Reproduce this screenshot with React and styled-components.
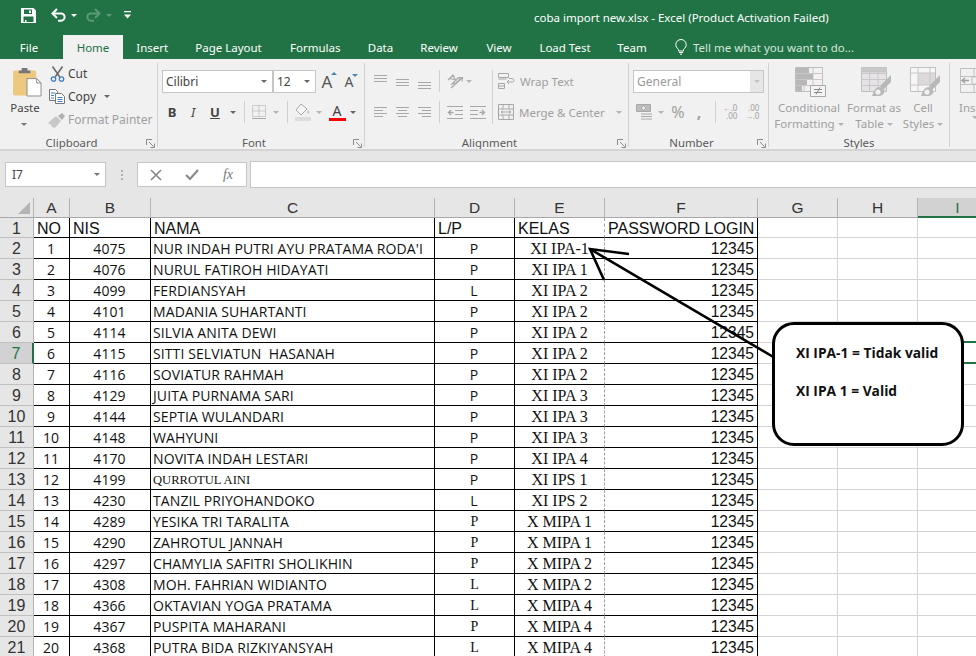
import styled, { createGlobalStyle } from "styled-components";

const GlobalStyle = createGlobalStyle`
  html, body { margin: 0; padding: 0; background: #fff; }
  body { font-family: "Noto Sans", "Open Sans", sans-serif; font-size: 12px; }
`;

const GREEN = "#217346";
const DIM = "#b4b4b4";
const DARK = "#595959";

const Page = styled.div`
  position: relative;
  width: 976px;
  height: 656px;
  overflow: hidden;
`;

/* ---------- title bar + tabs ---------- */
const Header = styled.header`
  background: ${GREEN};
  height: 59px;
  color: #fff;
`;
const TitleRow = styled.div`
  display: flex;
  height: 35px;
  align-items: center;
`;
const Qat = styled.div`
  width: 534px;
  padding: 0 0 5px 21px;
  box-sizing: border-box;
  display: flex;
  align-items: center;
`;
const Title = styled.div`
  font-size: 11.5px;
  white-space: nowrap;
`;
const Tabs = styled.nav`
  display: flex;
  height: 24px;
`;
const Tab = styled.div`
  width: ${(p) => p.$w}px;
  margin-left: ${(p) => p.$ml || 0}px;
  height: 24px;
  line-height: 25px;
  text-align: center;
  font-size: 11.5px;
  white-space: nowrap;
  background: ${(p) => (p.$active ? "#f1f1f1" : "transparent")};
  color: ${(p) => (p.$active ? GREEN : "#fff")};
`;
const TellMe = styled.div`
  display: flex;
  align-items: center;
  gap: 6px;
  margin-left: 15px;
  font-size: 11.5px;
  color: #d5e6dc;
  white-space: nowrap;
`;

/* ---------- ribbon ---------- */
const Ribbon = styled.section`
  display: flex;
  height: 92px;
  box-sizing: border-box;
  padding-top: 4px;
  background: #f1f1f1;
  border-bottom: 2px solid #d4d4d4;
  overflow: hidden;
`;
const Group = styled.div`
  flex: none;
  width: ${(p) => p.$w}px;
  height: 84px;
  border-right: 1px solid #d2d2d2;
  box-sizing: content-box;
`;
const GroupBody = styled.div`
  height: 73px;
  display: ${(p) => (p.$row ? "flex" : "flow-root")};
  padding-left: ${(p) => p.$pl || 0}px;
`;
const GroupFoot = styled.div`
  display: flex;
  align-items: center;
  height: 14px;
`;
const GroupLabel = styled.div`
  flex: 1;
  text-align: center;
  font-size: 11.4px;
  line-height: 14px;
  color: ${DARK};
  white-space: nowrap;
`;
const LauncherBox = styled.div`
  width: 14px;
  display: flex;
  justify-content: center;
`;
const Caret = styled.i`
  display: inline-block;
  width: 0;
  height: 0;
  flex: none;
  border-left: 3px solid transparent;
  border-right: 3px solid transparent;
  border-top: 3px solid ${(p) => p.$color || "#666"};
  margin-left: ${(p) => p.$ml || 0}px;
`;
const PasteCaret = styled(Caret)`
  margin-top: 7px;
`;
const Slot = styled.div`
  flex: none;
  width: ${(p) => p.$w}px;
  height: 24px;
  display: flex;
  align-items: center;
  justify-content: center;
  color: ${(p) => p.$color || DIM};
`;
const Sep = styled.i`
  display: block;
  width: 1px;
  height: 22px;
  background: #d0d0d0;
`;
const ToolRow = styled.div`
  display: flex;
  align-items: center;
  height: ${(p) => p.$h || 24}px;
  margin-top: ${(p) => p.$mt || 0}px;
`;

/* clipboard */
const PasteCol = styled.div`
  width: 48px;
  flex: none;
  display: flex;
  flex-direction: column;
  align-items: center;
  padding-top: 3px;
  font-size: 11.4px;
  color: #444;
  & svg {
    margin-left: 6px;
  }
`;
const PasteText = styled.span`
  line-height: 16px;
  margin-top: 3px;
  margin-left: 2px;
`;
const ClipRow = styled.div`
  display: flex;
  align-items: center;
  height: 23px;
  color: ${(p) => (p.$off ? "#a0a0a0" : "#444")};
  white-space: nowrap;
  font-size: 12px;
`;
const ClipIcon = styled.div`
  width: 18px;
  margin-right: 2px;
  display: flex;
  justify-content: center;
`;
const ClipCol = styled.div`
  margin-top: -1px;
`;

/* font */
const Combo = styled.div`
  flex: none;
  width: ${(p) => p.$w}px;
  height: 23px;
  box-sizing: border-box;
  border: 1px solid #c6c6c6;
  background: #fff;
  display: flex;
  align-items: center;
  justify-content: space-between;
  padding-left: 3px;
  padding-right: ${(p) => (p.$flat ? 0 : 5)}px;
  font-size: 12px;
  color: ${(p) => p.$color || "#444"};
`;
const DropFlat = styled.div`
  width: 13px;
  height: 21px;
  background: #e6e6e6;
  display: flex;
  align-items: center;
  justify-content: center;
`;
const SizeA = styled.span`
  font-size: ${(p) => p.$size}px;
  line-height: 1;
  color: #555;
  position: relative;
`;
const SizeMark = styled.i`
  position: absolute;
  right: -5px;
  top: -1px;
  width: 0;
  height: 0;
  border-left: 3px solid transparent;
  border-right: 3px solid transparent;
  ${(p) =>
    p.$up
      ? "border-bottom: 3px solid #4d82b8;"
      : "border-top: 3px solid #4d82b8;"}
`;
const FaceLetter = styled.span`
  font-size: 13px;
  font-weight: ${(p) => (p.$b ? 700 : 400)};
  font-style: ${(p) => (p.$i ? "italic" : "normal")};
  text-decoration: ${(p) => (p.$u ? "underline" : "none")};
  color: #444;
`;
const ColorLetter = styled.div`
  display: flex;
  flex-direction: column;
  align-items: center;
  font-size: 14px;
  line-height: 13px;
  color: #444;
  &::after {
    content: "";
    width: 17px;
    height: 3px;
    background: #f00;
    margin-top: 1px;
  }
`;

/* alignment */
const AlignCols = styled.div`
  display: flex;
  padding-left: 4px;
`;
const AlignCol = styled.div`
  width: ${(p) => p.$w}px;
  padding-top: 6px;
  flex: none;
`;
const VSep = styled.div`
  flex: none;
  width: 6px;
  display: flex;
  justify-content: center;
  padding-top: 7px;
  &::before {
    content: "";
    width: 1px;
    height: 54px;
    background: #d0d0d0;
  }
`;
const WideTool = styled.div`
  display: flex;
  align-items: center;
  height: 24px;
  margin-top: ${(p) => p.$mt || 0}px;
  padding-left: 3px;
  gap: 5px;
  color: #a0a0a0;
  font-size: 11.5px;
  white-space: nowrap;
`;

/* number */
const Pct = styled.span`
  font-size: 16px;
  color: #a0a0a0;
`;
const Dec = styled.span`
  display: block;
  font-size: 8px;
  line-height: 8px;
  color: #a0a0a0;
  text-align: right;
  white-space: pre;
`;

/* styles */
const BigButton = styled.div`
  flex: none;
  width: ${(p) => p.$w}px;
  display: flex;
  flex-direction: column;
  align-items: center;
  padding-top: 4px;
  font-size: 11.5px;
  line-height: 16px;
  color: #a0a0a0;
  white-space: nowrap;
`;
const BigIcon = styled.div`
  height: 30px;
  margin-bottom: 3px;
  margin-left: ${(p) => p.$ml || 0}px;
`;
const BigLine = styled.div`
  display: flex;
  align-items: center;
  gap: 3px;
`;

/* ---------- formula bar ---------- */
const FormulaBand = styled.div`
  display: flex;
  align-items: center;
  height: 47px;
  box-sizing: border-box;
  padding: 11px 0 11px 5px;
  background: #e6e6e6;
`;
const NameBox = styled.div`
  width: 101px;
  height: 25px;
  box-sizing: border-box;
  background: #fff;
  border: 1px solid #c6c6c6;
  display: flex;
  align-items: center;
  justify-content: space-between;
  padding: 0 5px 0 6px;
  font-size: 12px;
  color: #444;
`;
const Grip = styled.div`
  width: 31px;
  display: flex;
  flex-direction: column;
  align-items: center;
  gap: 2px;
  & i {
    width: 2px;
    height: 2px;
    background: #b0b0b0;
  }
`;
const FxBox = styled.div`
  width: 110px;
  height: 25px;
  box-sizing: border-box;
  background: #fff;
  border: 1px solid #c6c6c6;
  display: flex;
  align-items: center;
`;
const FxSlot = styled.div`
  width: 36px;
  display: flex;
  justify-content: center;
  font-family: "Liberation Serif", serif;
  font-style: italic;
  font-size: 14px;
  color: #777;
`;
const FormulaInput = styled.div`
  flex: 1;
  height: 25px;
  margin-left: 3px;
  background: #fff;
  border: 1px solid #c6c6c6;
  border-right: 0;
`;

/* ---------- sheet ---------- */
const Sheet = styled.div`
  display: grid;
  grid-template-columns: 34px 36px 81px 284px 80px 90px 153px 80px 80px 80px;
  grid-template-rows: 20px 20px repeat(20, 21px);
  background: #fff;
  font-family: "Liberation Sans", Arial, sans-serif;
`;
const Corner = styled.div`
  background: #e6e6e6;
  border-right: 1px solid #b4b4b4;
  border-bottom: 1px solid #a8a8a8;
  display: flex;
  align-items: flex-end;
  justify-content: flex-end;
  padding: 0 3px 3px 0;
  & svg {
    display: block;
  }
`;
const ColHead = styled.div`
  background: ${(p) => (p.$on ? "#d2d2d2" : "#e6e6e6")};
  color: ${(p) => (p.$on ? GREEN : "#333")};
  border-right: 1px solid #b4b4b4;
  border-bottom: ${(p) => (p.$on ? `2px solid ${GREEN}` : "1px solid #a8a8a8")};
  font-size: 15.5px;
  line-height: 19px;
  text-align: center;
`;
const RowHead = styled.div`
  background: ${(p) => (p.$on ? "#d2d2d2" : "#e6e6e6")};
  color: ${(p) => (p.$on ? GREEN : "#333")};
  border-right: ${(p) => (p.$on ? `2px solid ${GREEN}` : "1px solid #b4b4b4")};
  border-bottom: 1px solid #c0c0c0;
  font-size: 16px;
  line-height: 21px;
  text-align: center;
`;
const CELL_FONTS = {
  sans: `font: 16px/20px "Liberation Sans", Arial, sans-serif;`,
  num: `font: 15.6px/20px "Liberation Sans", Arial, sans-serif;`,
  ui: `font: 14px/20px "Open Sans", "Noto Sans", sans-serif; letter-spacing: 0.1px;`,
  serif: `font: 16px/20px "Liberation Serif", serif;`,
  serifSmall: `font: 14px/20px "Liberation Serif", serif;`,
  serifName: `font: 12.6px/20px "Liberation Serif", serif;`,
};
const Cell = styled.div`
  box-sizing: border-box;
  border-bottom: 1px solid #000;
  border-right: ${(p) => (p.$dashed ? "1px dashed #a0a0a0" : "1px solid #000")};
  color: #111;
  white-space: pre;
  overflow: hidden;
  padding: 1px 3px 0 ${(p) => (p.$kind === "ui" || p.$kind === "serifName" ? 2 : 3)}px;
  text-align: ${(p) => p.$align || "left"};
  ${(p) => CELL_FONTS[p.$kind]}
`;
const Blank = styled.div`
  box-sizing: border-box;
  border-right: 1px solid #d4d4d4;
  border-bottom: 1px solid #d4d4d4;
  ${(p) =>
    p.$picked &&
    `border-bottom: 2px solid ${GREEN}; box-shadow: 0 -2px 0 ${GREEN};`}
`;

/* shapes lying over the sheet */
const ArrowLayer = styled.svg`
  position: absolute;
  left: 0;
  top: 0;
  pointer-events: none;
`;
const Callout = styled.div`
  position: absolute;
  left: 772px;
  top: 322px;
  width: 192px;
  height: 124px;
  box-sizing: border-box;
  border: 3px solid #000;
  border-radius: 22px;
  background: #fff;
  padding: 18px 0 0 21px;
  font-family: "Open Sans", "Noto Sans", sans-serif;
  font-weight: 700;
  font-size: 13.8px;
  color: #111;
`;
const CalloutLine = styled.div`
  height: 38px;
  line-height: 20px;
  white-space: nowrap;
`;

/* ---------- icons ---------- */
const SaveIcon = () => (
  <svg width="15" height="15" viewBox="0 0 15 15">
    <path
      fillRule="evenodd"
      fill="#fff"
      d="M0 0h12.5L15 2.5V15H0zM3 1.5V6h8V1.5zM2.5 14h10V8.5h-10zM8 2.5h2v2.5H8z"
    />
    <path fill="#fff" d="M4 12h1.5v2H4z" />
  </svg>
);
const Turn = ({ color, flip }) => (
  <svg width="16" height="14" viewBox="0 0 16 14" style={flip ? { transform: "scaleX(-1)" } : undefined}>
    <path d="M2 5.5h8a3.6 3.6 0 0 1 0 7.2H7" fill="none" stroke={color} strokeWidth="2" />
    <path d="M6 1 1.5 5.5 6 10" fill="none" stroke={color} strokeWidth="2" />
  </svg>
);
const BarCaret = () => (
  <svg width="7" height="8" viewBox="0 0 7 8">
    <path d="M0 0h7v1.2H0zM0 3.5h7L3.5 7.5z" fill="#fff" />
  </svg>
);
const Bulb = () => (
  <svg width="12" height="16" viewBox="0 0 12 16" fill="none" stroke="#fff" strokeWidth="1">
    <path d="M3.5 10.5C1.5 8.5.8 7.5.8 5.7a5.2 5.2 0 0 1 10.4 0c0 1.8-.7 2.8-2.7 4.8v1.5h-5z" />
    <path d="M4 13.5h4M5 15.2h2" />
  </svg>
);
const Launcher = () => (
  <svg width="9" height="9" viewBox="0 0 9 9" fill="none" stroke="#8a8a8a">
    <path d="M.5 6V.5H6" />
    <path d="M3 3l4.5 4.5M8.500 4.500v4h-4" />
  </svg>
);
const PasteIcon = () => (
  <svg width="29" height="31" viewBox="0 0 30 31">
    <rect x="0" y="4" width="24" height="26" rx="2" fill="#edc87f" />
    <path d="M6 4h3V1.500h6V4h3v3H6z" fill="#767676" />
    <path d="M14.500 12.500h10l4.500 4.500v13.500H14.500z" fill="#fff" stroke="#8a8a8a" />
    <path d="M24.500 12.500V17H29" fill="none" stroke="#8a8a8a" />
  </svg>
);
const Scissors = () => (
  <svg width="15" height="16" viewBox="0 0 15 16" fill="none">
    <path d="M2.500 .5 9.800 11M12.500 .5 5.200 11" stroke="#6a6a6a" strokeWidth="1.600" />
    <circle cx="3.500" cy="13" r="2.200" stroke="#3f7fbd" strokeWidth="1.300" />
    <circle cx="11.500" cy="13" r="2.200" stroke="#3f7fbd" strokeWidth="1.300" />
  </svg>
);
const CopyIcon = () => (
  <svg width="16" height="15" viewBox="0 0 16 15" fill="#fff" stroke="#777">
    <path d="M.5.5h6l2 2v9h-8z" />
    <path d="M6.500 4.500h6l3 3v7h-9z" />
    <path d="M2 4h4M2 6.500h3M2 9h3M8.500 8.500h5M8.500 10.500h5M8.500 12.500h5" stroke="#3f7fbd" fill="none" />
  </svg>
);
const PainterIcon = () => (
  <svg width="18" height="16" viewBox="0 0 18 16">
    <path d="M0 11 8 4l5 5-6 7-3-1-1-2z" fill="#c8c8c8" />
    <path d="M10 4l4-3 3 3-3 4z" fill="#b0b0b0" />
  </svg>
);
const Lines = ({ rows, top = 0 }) => (
  <svg width="15" height="15" viewBox="0 0 15 15" stroke="#a8a8a8">
    {rows.map((r, i) => (
      <path key={i} d={`M${r[0]} ${top + 0.5 + i * 3}H${r[1]}`} />
    ))}
  </svg>
);
const Orient = () => (
  <svg width="18" height="18" viewBox="0 0 18 18" fill="none" stroke="#a8a8a8" strokeWidth="1.200">
    <path d="M2 8l5-5 3 6M3.500 6.500l5 1M6 12l6-6c2-1 2 2 0 3l-2 2z" />
    <path d="M5 16 16 6M12.500 5.500 16.500 5.500 16 9.500" />
  </svg>
);
const Indent = ({ flip }) => (
  <svg width="16" height="13" viewBox="0 0 16 13" stroke="#a8a8a8" fill="none" style={flip ? { transform: "scaleX(-1)" } : undefined}>
    <path d="M0 .5h16M8 4.500h8M8 8.500h8M0 12.500h16" />
    <path d="M6.500 6.500H1.500M4 4 1.500 6.500 4 9" strokeWidth="1.400" />
  </svg>
);
const WrapIcon = () => (
  <svg width="17" height="16" viewBox="0 0 17 16" fill="none" stroke="#a8a8a8">
    <path d="M.5.5h10v4H.5zM.5 6h8M.5 10.500h6v5h-6zM.5 13h6" />
    <path d="M9 9h5.500c2 0 2-3.500-.5-3.500H11M11 7l-2 2 2 2" />
  </svg>
);
const MergeIcon = () => (
  <svg width="16" height="16" viewBox="0 0 16 16" fill="none" stroke="#a8a8a8">
    <path d="M.5.5h15v15H.5zM.5 5h15M.5 11h15M5 .5V5M11 .5V5M5 11v4.500M11 11v4.500" />
    <path d="M3 8h10M5 6.500 3 8l2 1.500M11 6.500 13 8l-2 1.500" />
  </svg>
);
const BorderIcon = () => (
  <svg width="14" height="14" viewBox="0 0 14 14" fill="none">
    <path d="M.5.5h13v11H.5zM7 .5v11M.5 6h13" stroke="#a8a8a8" strokeDasharray="1 1" />
    <path d="M0 13.500h14" stroke="#a8a8a8" />
  </svg>
);
const FillIcon = () => (
  <svg width="16" height="18" viewBox="0 0 16 18" fill="none">
    <path d="M6 1 1 7l5 5 6-6z" stroke="#a8a8a8" fill="#f6f6f6" />
    <path d="M13 7c1 2 1.500 3 .5 3.500S12 9 13 7z" fill="#b8b8b8" />
    <path d="M0 14h16v4H0z" fill="#dcdcdc" />
  </svg>
);
const MoneyIcon = () => (
  <svg width="17" height="16" viewBox="0 0 17 16" fill="none" stroke="#a8a8a8">
    <path d="M.5.5h14v7H.5z" fill="#bdbdbd" />
    <circle cx="7.500" cy="4" r="2" fill="#f1f1f1" />
    <path d="M5 10h11M5 12.500h11M5 15h11" />
  </svg>
);
const CondIcon = () => (
  <svg width="31" height="30" viewBox="0 0 31 30">
    <path d="M.5.5h27v24H.5z" fill="#f4f0f4" stroke="#bdbdbd" />
    <path d="M9 .5v24M18 .5v24M.5 6.500h27M.5 12.500h27M.5 18.500h27" stroke="#c8c8c8" fill="none" />
    <path d="M1 1h13v5H1zM1 7h17v5H1zM1 13h11v5H1zM1 19h6v5H1z" fill="#b8b8b8" />
    <path d="M15.500 18.500h15v11h-15z" fill="#f4f4f4" stroke="#a8a8a8" />
    <path d="M19 22.500h8M19 25.500h8M25 20.500l-4 7" stroke="#8a8a8a" />
  </svg>
);
const Brush = () => (
  <>
    <path d="M30 8 19 19l3 4 8-8z" fill="#b8b8b8" />
    <path d="M19 20c-4 0-6 3-8 9h8c3-1 5-3 4-6z" fill="#b8b8b8" />
    <circle cx="17" cy="25" r="2.600" fill="#f1f1f1" />
  </>
);
const TableIcon = () => (
  <svg width="30" height="30" viewBox="0 0 30 30">
    <path d="M.5.5h25v24H.5z" fill="#e6e2e6" stroke="#c0c0c0" />
    <path d="M.5.5h25v5H.5z" fill="#c8c8c8" />
    <path d="M8.500.5v24M17 .5v24M.5 6.500h25M.5 12.500h25M.5 18.500h25" stroke="#c8c8c8" fill="none" />
    <Brush />
  </svg>
);
const CellIcon = () => (
  <svg width="30" height="30" viewBox="0 0 30 30">
    <path d="M.5.5h25v24H.5z" fill="#f6f6f6" stroke="#c0c0c0" />
    <path d="M8 6h17v12H8z" fill="#dcd8dc" />
    <path d="M.5 6h25M.5 18h25M8 .5v24M20 .5v24" stroke="#c8c8c8" fill="none" />
    <Brush />
  </svg>
);
const InsertIcon = () => (
  <svg width="30" height="30" viewBox="0 0 30 30" fill="none" stroke="#c0c0c0">
    <path d="M.5 1.500h29v24H.5zM.5 9.500h29M.5 17.500h29M14 1.500v8M14 17.500v8" />
    <path d="M9 13.500H2M5 11l-3 2.500L5 16" stroke="#a0a0a0" strokeWidth="1.400" />
    <path d="M12 10h12v7H12z" fill="#f1f1f1" />
  </svg>
);
const CrossIcon = () => (
  <svg width="12" height="12" viewBox="0 0 12 12" stroke="#8a8a8a" strokeWidth="1.700">
    <path d="M1 1l10 10M11 1 1 11" />
  </svg>
);
const CheckIcon = () => (
  <svg width="14" height="12" viewBox="0 0 14 12" fill="none" stroke="#8a8a8a" strokeWidth="2.200">
    <path d="M1 6l4 4 8-9" />
  </svg>
);

/* ---------- data ---------- */
const TABS = [
  ["File", 58, 0],
  ["Home", 60, 5, true],
  ["Insert", 58.5],
  ["Page Layout", 94],
  ["Formulas", 79.5],
  ["Data", 51],
  ["Review", 66],
  ["View", 54],
  ["Load Test", 78],
  ["Team", 56],
];

const COLS = ["A", "B", "C", "D", "E", "F", "G", "H", "I"];
const FIRST_ROW = ["NO", "NIS", "NAMA", "L/P", "KELAS", "PASSWORD LOGIN"];

const STUDENTS = [
  ["4075", "NUR INDAH PUTRI AYU PRATAMA RODA'I", "P", "XI IPA-1"],
  ["4076", "NURUL FATIROH HIDAYATI", "P", "XI IPA 1"],
  ["4099", "FERDIANSYAH", "L", "XI IPA 2"],
  ["4101", "MADANIA SUHARTANTI", "P", "XI IPA 2"],
  ["4114", "SILVIA ANITA DEWI", "P", "XI IPA 2"],
  ["4115", "SITTI SELVIATUN  HASANAH", "P", "XI IPA 2"],
  ["4116", "SOVIATUR RAHMAH", "P", "XI IPA 2"],
  ["4129", "JUITA PURNAMA SARI", "P", "XI IPA 3"],
  ["4144", "SEPTIA WULANDARI", "P", "XI IPA 3"],
  ["4148", "WAHYUNI", "P", "XI IPA 3"],
  ["4170", "NOVITA INDAH LESTARI", "P", "XI IPA 4"],
  ["4199", "QURROTUL AINI", "P", "XI IPS 1"],
  ["4230", "TANZIL PRIYOHANDOKO", "L", "XI IPS 2"],
  ["4289", "YESIKA TRI TARALITA", "P", "X MIPA 1"],
  ["4290", "ZAHROTUL JANNAH", "P", "X MIPA 1"],
  ["4297", "CHAMYLIA SAFITRI SHOLIKHIN", "P", "X MIPA 2"],
  ["4308", "MOH. FAHRIAN WIDIANTO", "L", "X MIPA 2"],
  ["4366", "OKTAVIAN YOGA PRATAMA", "L", "X MIPA 4"],
  ["4367", "PUSPITA MAHARANI", "P", "X MIPA 4"],
  ["4368", "PUTRA BIDA RIZKIYANSYAH", "L", "X MIPA 4"],
];

function Blanks({ row }) {
  return (
    <>
      <Blank />
      <Blank />
      <Blank $picked={row === 7} />
    </>
  );
}

function StudentRow({ student, index }) {
  const [nis, name, gender, kelas] = student;
  const no = index + 1;
  const row = index + 2;
  return (
    <>
      <RowHead $on={row === 7}>{row}</RowHead>
      <Cell $kind="ui" $align="center">{no}</Cell>
      <Cell $kind="ui" $align="center">{nis}</Cell>
      <Cell $kind={no === 12 ? "serifName" : "ui"}>{name}</Cell>
      <Cell $kind={no >= 14 ? "serifSmall" : "ui"} $align="center">{gender}</Cell>
      <Cell $kind="serif" $align="center" $dashed>{kelas}</Cell>
      <Cell $kind="num" $align="right">12345</Cell>
      <Blanks row={row} />
    </>
  );
}

export default function App() {
  return (
    <Page>
      <GlobalStyle />
      <Header>
        <TitleRow>
          <Qat>
            <SaveIcon />
            <Slot $w={15} />
            <Turn color="#fff" />
            <Caret $color="#fff" $ml={4} />
            <Slot $w={8} />
            <Turn color="#5d9a78" flip />
            <Caret $color="#5d9a78" $ml={5} />
            <Slot $w={12} />
            <BarCaret />
          </Qat>
          <Title>coba import new.xlsx - Excel (Product Activation Failed)</Title>
        </TitleRow>
        <Tabs>
          {TABS.map(([label, w, ml, active]) => (
            <Tab key={label} $w={w} $ml={ml} $active={active}>
              {label}
            </Tab>
          ))}
          <TellMe>
            <Bulb />
            Tell me what you want to do...
          </TellMe>
        </Tabs>
      </Header>

      <Ribbon>
        <Group $w={157}>
          <GroupBody $row>
            <PasteCol>
              <PasteIcon />
              <PasteText>Paste</PasteText>
              <PasteCaret $color="#777" />
            </PasteCol>
            <ClipCol>
              <ClipRow>
                <ClipIcon><Scissors /></ClipIcon>Cut
              </ClipRow>
              <ClipRow>
                <ClipIcon><CopyIcon /></ClipIcon>Copy
                <Caret $ml={8} />
              </ClipRow>
              <ClipRow $off>
                <ClipIcon><PainterIcon /></ClipIcon>Format Painter
              </ClipRow>
            </ClipCol>
          </GroupBody>
          <GroupFoot>
            <GroupLabel>Clipboard</GroupLabel>
            <LauncherBox><Launcher /></LauncherBox>
          </GroupFoot>
        </Group>

        <Group $w={206}>
          <GroupBody $pl={4}>
            <ToolRow $h={23} $mt={7}>
              <Combo $w={111}>Cilibri<Caret /></Combo>
              <Combo $w={43}>12<Caret /></Combo>
              <Slot $w={22} $color="#555">
                <SizeA $size={17}>A<SizeMark $up /></SizeA>
              </Slot>
              <Slot $w={22} $color="#555">
                <SizeA $size={14}>A<SizeMark /></SizeA>
              </Slot>
            </ToolRow>
            <ToolRow $mt={7}>
              <Slot $w={20}><FaceLetter $b>B</FaceLetter></Slot>
              <Slot $w={22}><FaceLetter $i>I</FaceLetter></Slot>
              <Slot $w={22}><FaceLetter $u $b>U</FaceLetter></Slot>
              <Slot $w={14}><Caret /></Slot>
              <Slot $w={8}><Sep /></Slot>
              <Slot $w={22}><BorderIcon /></Slot>
              <Slot $w={12}><Caret $color={DIM} /></Slot>
              <Slot $w={10}><Sep /></Slot>
              <Slot $w={22}><FillIcon /></Slot>
              <Slot $w={10}><Caret $color={DIM} /></Slot>
              <Slot $w={26}><ColorLetter>A</ColorLetter></Slot>
              <Slot $w={6}><Caret /></Slot>
            </ToolRow>
          </GroupBody>
          <GroupFoot>
            <GroupLabel>Font</GroupLabel>
            <LauncherBox><Launcher /></LauncherBox>
          </GroupFoot>
        </Group>

        <Group $w={263}>
          <GroupBody>
            <AlignCols>
              <AlignCol $w={120}>
                <ToolRow>
                  <Slot $w={22}><Lines rows={[[1, 14], [1, 14], [1, 14]]} top={1} /></Slot>
                  <Slot $w={22}><Lines rows={[[1, 14], [1, 14], [1, 14]]} top={5} /></Slot>
                  <Slot $w={22}><Lines rows={[[1, 14], [1, 14], [1, 14]]} top={8} /></Slot>
                  <Slot $w={8}><Sep /></Slot>
                  <Slot $w={24}><Orient /></Slot>
                  <Slot $w={4}><Caret $color={DIM} /></Slot>
                </ToolRow>
                <ToolRow $mt={7}>
                  <Slot $w={22}><Lines rows={[[1, 14], [1, 10], [1, 14], [1, 10]]} top={2} /></Slot>
                  <Slot $w={22}><Lines rows={[[1, 14], [3, 12], [1, 14], [3, 12]]} top={2} /></Slot>
                  <Slot $w={22}><Lines rows={[[1, 14], [5, 14], [1, 14], [5, 14]]} top={2} /></Slot>
                  <Slot $w={8}><Sep /></Slot>
                  <Slot $w={24}><Indent /></Slot>
                  <Slot $w={22}><Indent flip /></Slot>
                </ToolRow>
              </AlignCol>
              <VSep />
              <AlignCol $w={130}>
                <WideTool><WrapIcon /><span>Wrap Text</span></WideTool>
                <WideTool $mt={7}>
                  <MergeIcon />
                  <span>Merge &amp; Center</span>
                  <Caret $color={DIM} $ml={6} />
                </WideTool>
              </AlignCol>
            </AlignCols>
          </GroupBody>
          <GroupFoot>
            <GroupLabel>Alignment</GroupLabel>
            <LauncherBox><Launcher /></LauncherBox>
          </GroupFoot>
        </Group>

        <Group $w={139}>
          <GroupBody $pl={4}>
            <ToolRow $h={23} $mt={7}>
              <Combo $w={131} $flat $color="#999">
                General
                <DropFlat><Caret $color="#c4c4c4" /></DropFlat>
              </Combo>
            </ToolRow>
            <ToolRow $mt={7}>
              <Slot $w={22}><MoneyIcon /></Slot>
              <Slot $w={12}><Caret $color={DIM} /></Slot>
              <Slot $w={22}><Pct>%</Pct></Slot>
              <Slot $w={20}><Pct><b>,</b></Pct></Slot>
              <Slot $w={12}><Sep /></Slot>
              <Slot $w={18}><Dec>{"←.0\n.00"}</Dec></Slot>
              <Slot $w={26}><Dec>{".00\n→.0"}</Dec></Slot>
            </ToolRow>
          </GroupBody>
          <GroupFoot>
            <GroupLabel>Number</GroupLabel>
            <LauncherBox><Launcher /></LauncherBox>
          </GroupFoot>
        </Group>

        <Group $w={180}>
          <GroupBody $row>
            <BigButton $w={80}>
              <BigIcon $ml={3}><CondIcon /></BigIcon>
              <BigLine>Conditional</BigLine>
              <BigLine>Formatting<Caret $color={DIM} /></BigLine>
            </BigButton>
            <BigButton $w={50}>
              <BigIcon $ml={4}><TableIcon /></BigIcon>
              <BigLine>Format as</BigLine>
              <BigLine>Table<Caret $color={DIM} /></BigLine>
            </BigButton>
            <BigButton $w={48}>
              <BigIcon $ml={4}><CellIcon /></BigIcon>
              <BigLine>Cell</BigLine>
              <BigLine>Styles<Caret $color={DIM} /></BigLine>
            </BigButton>
          </GroupBody>
          <GroupFoot>
            <GroupLabel>Styles</GroupLabel>
          </GroupFoot>
        </Group>

        <Group $w={150}>
          <GroupBody $row>
            <BigButton $w={50}>
              <BigIcon><InsertIcon /></BigIcon>
              <BigLine>Insert</BigLine>
              <BigLine><Caret $color={DIM} /></BigLine>
            </BigButton>
          </GroupBody>
        </Group>
      </Ribbon>

      <FormulaBand>
        <NameBox>I7<Caret $color="#777" /></NameBox>
        <Grip><i /><i /><i /></Grip>
        <FxBox>
          <FxSlot><CrossIcon /></FxSlot>
          <FxSlot><CheckIcon /></FxSlot>
          <FxSlot>fx</FxSlot>
        </FxBox>
        <FormulaInput />
      </FormulaBand>

      <Sheet>
        <Corner>
          <svg width="12" height="12" viewBox="0 0 12 12">
            <path d="M12 0v12H0z" fill="#b4b4b4" />
          </svg>
        </Corner>
        {COLS.map((c) => (
          <ColHead key={c} $on={c === "I"}>{c}</ColHead>
        ))}

        <RowHead>1</RowHead>
        {FIRST_ROW.map((label, i) => (
          <Cell key={label} $kind="sans" $dashed={i === 4}>{label}</Cell>
        ))}
        <Blanks row={1} />

        {STUDENTS.map((s, i) => (
          <StudentRow key={s[0]} student={s} index={i} />
        ))}
      </Sheet>

      <ArrowLayer width="976" height="656" viewBox="0 0 976 656" fill="none" stroke="#000" strokeWidth="2.600">
        <path d="M775 358 590 249" />
        <path d="M629 254 590 249 604 280" />
      </ArrowLayer>

      <Callout>
        <CalloutLine>XI IPA-1 = Tidak valid</CalloutLine>
        <CalloutLine>XI IPA 1 = Valid</CalloutLine>
      </Callout>
    </Page>
  );
}
